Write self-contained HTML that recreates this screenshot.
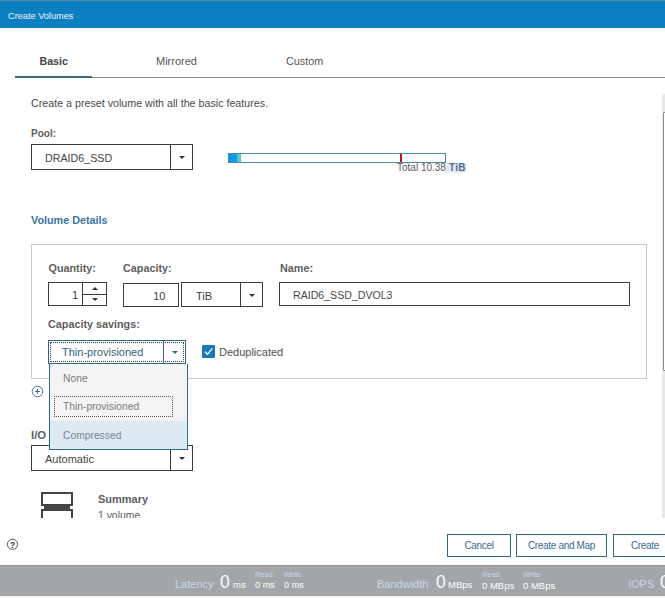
<!DOCTYPE html>
<html><head><meta charset="utf-8">
<style>
*{box-sizing:border-box;margin:0;padding:0}
html,body{width:665px;height:598px;overflow:hidden;background:#fff;font-family:"Liberation Sans",sans-serif;color:#4a4a4a}
.a{position:absolute}
.t{position:absolute;white-space:nowrap;line-height:1}
#hdr{left:0;top:0;width:665px;height:28px;background:#0b7fc1;border-top:1px solid #5d8aa6}
#hdr span{position:absolute;left:8px;top:10px;font-size:9.2px;color:#eef6ff}
.box{position:absolute;border:1px solid #3c3c3c;background:#fff}
.sep{position:absolute;top:0;bottom:0;width:1px;background:#3c3c3c}
.arr{position:absolute;width:0;height:0;border-left:3px solid transparent;border-right:3px solid transparent;border-top:3px solid #333}
.lbl{position:absolute;white-space:nowrap;line-height:1;font-weight:bold;font-size:10.8px;color:#5e5e5e}
.btn{position:absolute;border:1px solid #2d6b88;background:#fff;color:#3a6a8c;font-size:10px;letter-spacing:-0.33px;text-align:center;line-height:21px;height:23px}
</style></head><body>
<div id="hdr" class="a"><span>Create Volumes</span></div>

<!-- tabs -->
<div class="a" style="left:15px;top:77px;width:650px;height:1px;background:#8a8a8a"></div>
<div class="a" style="left:15px;top:76px;width:77px;height:2px;background:#3d6a86"></div>
<div class="t" style="left:39.5px;top:56px;font-size:10.6px;font-weight:bold;color:#444">Basic</div>
<div class="t" style="left:156px;top:56px;font-size:11px;color:#555">Mirrored</div>
<div class="t" style="left:286px;top:56px;font-size:10.8px;color:#555">Custom</div>

<div class="t" style="left:31px;top:98px;font-size:10.7px;color:#4a4a4a">Create a preset volume with all the basic features.</div>

<div class="lbl" style="left:31px;top:129px;font-size:10px">Pool:</div>
<div class="box" style="left:31px;top:144px;width:162px;height:26px">
  <div class="t" style="left:13px;top:8px;font-size:10.7px;color:#444">DRAID6_SSD</div>
  <div class="sep" style="left:138px"></div>
  <div class="arr" style="left:147px;top:11px"></div>
</div>

<!-- capacity bar -->
<div class="a" style="left:228px;top:153px;width:218px;height:10px;border:1px solid #4a8aa8;background:#fff"></div>
<div class="a" style="left:229px;top:154px;width:8px;height:8px;background:#0a9ae6"></div>
<div class="a" style="left:237px;top:154px;width:4px;height:8px;background:#58c8c8"></div>
<div class="a" style="left:400px;top:154px;width:2px;height:8px;background:#c8102e"></div>
<div class="a" style="left:445px;top:163px;width:21px;height:10px;background:#e3ebf3"></div>
<div class="t" style="left:397px;top:163px;font-size:10px;color:#5a5a5a">Total 10.38</div>
<div class="t" style="left:449px;top:163px;font-size:10px;font-weight:bold;color:#4f6f88;letter-spacing:0.3px">TiB</div>

<div class="t" style="left:31px;top:215px;font-size:10.8px;font-weight:bold;color:#3a74a3">Volume Details</div>

<!-- panel -->
<div class="a" style="left:31px;top:244px;width:616px;height:135px;border:1px solid #c8c8c8"></div>

<div class="lbl" style="left:48.5px;top:263px">Quantity:</div>
<div class="lbl" style="left:123px;top:263px">Capacity:</div>
<div class="lbl" style="left:280px;top:263px">Name:</div>

<div class="box" style="left:48px;top:282px;width:59px;height:24px">
  <div class="t" style="right:28px;top:7px;font-size:11px;color:#3c3c3c">1</div>
  <div class="sep" style="left:33px"></div>
  <div class="a" style="left:33px;top:11px;width:25px;height:1px;background:#3c3c3c"></div>
  <div class="arr" style="left:43px;top:4px;border-top:0;border-bottom:3px solid #333"></div>
  <div class="arr" style="left:43px;top:15px"></div>
</div>
<div class="box" style="left:123px;top:283px;width:56px;height:24px">
  <div class="t" style="right:12.5px;top:7px;font-size:11px;color:#3c3c3c">10</div>
</div>
<div class="box" style="left:181px;top:282px;width:82px;height:25px">
  <div class="t" style="left:14px;top:8px;font-size:11px;color:#3c3c3c">TiB</div>
  <div class="sep" style="left:58px"></div>
  <div class="arr" style="left:67px;top:11px"></div>
</div>
<div class="box" style="left:279px;top:282px;width:351px;height:24px">
  <div class="t" style="left:13px;top:7px;font-size:10.6px;color:#4a4a4a">RAID6_SSD_DVOL3</div>
</div>

<div class="lbl" style="left:48px;top:319px">Capacity savings:</div>

<!-- thin provisioned select -->
<div class="a" style="left:48px;top:340px;width:138px;height:24px;border:1px solid #2d6b88;background:#fff">
  <div class="a" style="left:1px;top:1px;right:1px;bottom:1px;border:1px dotted #444"></div>
  <div class="t" style="left:13px;top:6px;font-size:11px;color:#2f5f80">Thin-provisioned</div>
  <div class="sep" style="left:114px;background:#2d6b88"></div>
  <div class="arr" style="left:123px;top:10px;border-top-color:#2d6b88"></div>
</div>
<!-- checkbox -->
<div class="a" style="left:202px;top:345px;width:13px;height:13px;background:#1b78b8;border-radius:1px">
  <svg width="13" height="13" viewBox="0 0 13 13" style="position:absolute;left:0;top:0"><path d="M3 6.8 L5.5 9.3 L10.2 3.3" stroke="#fff" stroke-width="1.3" fill="none"/></svg>
</div>
<div class="t" style="left:219px;top:347px;font-size:11px;color:#505050">Deduplicated</div>

<!-- plus circle -->
<svg class="a" style="left:30px;top:385px" width="15" height="14" viewBox="0 0 15 14"><circle cx="7.5" cy="6.5" r="5.3" stroke="#3f7090" stroke-width="1" fill="none"/><path d="M7.5 4v5M5 6.5h5" stroke="#3f7090" stroke-width="1"/></svg>

<div class="lbl" style="left:31px;top:429.5px;font-size:11.4px">I/O</div>
<div class="box" style="left:31px;top:445px;width:162px;height:26px">
  <div class="t" style="left:13px;top:8px;font-size:11px;color:#444">Automatic</div>
  <div class="sep" style="left:138px"></div>
  <div class="arr" style="left:147px;top:11px"></div>
</div>

<!-- dropdown list -->
<div class="a" style="left:49px;top:364px;width:139px;height:86px;background:#f4f4f4;border:1px solid #2d6b88;border-top:0">
  <div class="t" style="left:13px;top:9.5px;font-size:10.3px;color:#7a7a7a">None</div>
  <div class="a" style="left:4px;top:32px;width:119px;height:21px;border:1px dotted #555"></div>
  <div class="t" style="left:13px;top:37.5px;font-size:10.3px;color:#7a7a7a">Thin-provisioned</div>
  <div class="a" style="left:0;top:57px;width:137px;height:28px;background:#dde9f3"></div>
  <div class="t" style="left:13px;top:66.5px;font-size:10.3px;color:#7b8590">Compressed</div>
</div>

<!-- summary -->
<div class="a" style="left:0;top:480px;width:660px;height:38px;overflow:hidden">
  <div class="a" style="left:41px;top:12px;width:32px;height:14px;border:2px solid #444"></div>
  <div class="a" style="left:44px;top:25px;width:26px;height:4px;background:#444"></div>
  <div class="a" style="left:41px;top:29px;width:32px;height:12px;border:2px solid #444;border-bottom:0"></div>
  <div class="t" style="left:98px;top:14px;font-size:11px;font-weight:bold;color:#5e5e5e">Summary</div>
  <div class="t" style="left:98px;top:31px;font-size:10.4px;color:#5a5a5a">1 volume</div>
</div>

<!-- help -->
<svg class="a" style="left:6px;top:538px" width="14" height="14" viewBox="0 0 14 14"><circle cx="6.5" cy="6.3" r="5.1" stroke="#555" stroke-width="1" fill="none"/><text x="6.5" y="9.6" font-size="9" font-weight="bold" text-anchor="middle" fill="#444" font-family="Liberation Sans">?</text></svg>

<!-- buttons -->
<div class="btn" style="left:447px;top:534px;width:64px">Cancel</div>
<div class="btn" style="left:516px;top:534px;width:91px">Create and Map</div>
<div class="btn" style="left:613px;top:534px;width:64px">Create</div>

<!-- scrollbar -->
<div class="a" style="left:662px;top:94px;width:3px;height:424px;background:#e8e8e8"></div>
<div class="a" style="left:663px;top:112px;width:4px;height:259px;background:#fff;border:1px solid #8c8c8c;border-radius:1px"></div>

<!-- footer -->
<div class="a" style="left:0;top:565px;width:665px;height:31px;background:#a2a6a8;border-top:1px solid #8e9294"></div>
<div class="a" style="left:0;top:596px;width:665px;height:2px;background:#f4f4f4"></div>
<div class="t" style="left:175px;top:578.5px;font-size:11px;color:#c9d8ea">Latency</div>
<div class="t" style="left:220px;top:574px;font-size:17.5px;color:#fff">0</div>
<div class="t" style="left:233px;top:580px;font-size:9.5px;color:#fff">ms</div>
<div class="t" style="left:255px;top:571px;font-size:7.4px;color:#c9d8ea">Read</div>
<div class="t" style="left:255px;top:581px;font-size:9.2px;color:#fff">0 ms</div>
<div class="t" style="left:284px;top:571px;font-size:7.4px;color:#c9d8ea">Write</div>
<div class="t" style="left:284px;top:581px;font-size:9.2px;color:#fff">0 ms</div>

<div class="t" style="left:377px;top:578.5px;font-size:11px;color:#c9d8ea">Bandwidth</div>
<div class="t" style="left:436px;top:574px;font-size:17.5px;color:#fff">0</div>
<div class="t" style="left:448px;top:580px;font-size:9.5px;color:#fff">MBps</div>
<div class="t" style="left:482px;top:571px;font-size:7.4px;color:#c9d8ea">Read</div>
<div class="t" style="left:482px;top:581px;font-size:9.5px;color:#fff">0 MBps</div>
<div class="t" style="left:523px;top:571px;font-size:7.4px;color:#c9d8ea">Write</div>
<div class="t" style="left:523px;top:581px;font-size:9.5px;color:#fff">0 MBps</div>

<div class="t" style="left:628px;top:578.5px;font-size:11px;color:#c9d8ea">IOPS</div>
<div class="t" style="left:660px;top:574px;font-size:17.5px;color:#fff">0</div>
</body></html>
